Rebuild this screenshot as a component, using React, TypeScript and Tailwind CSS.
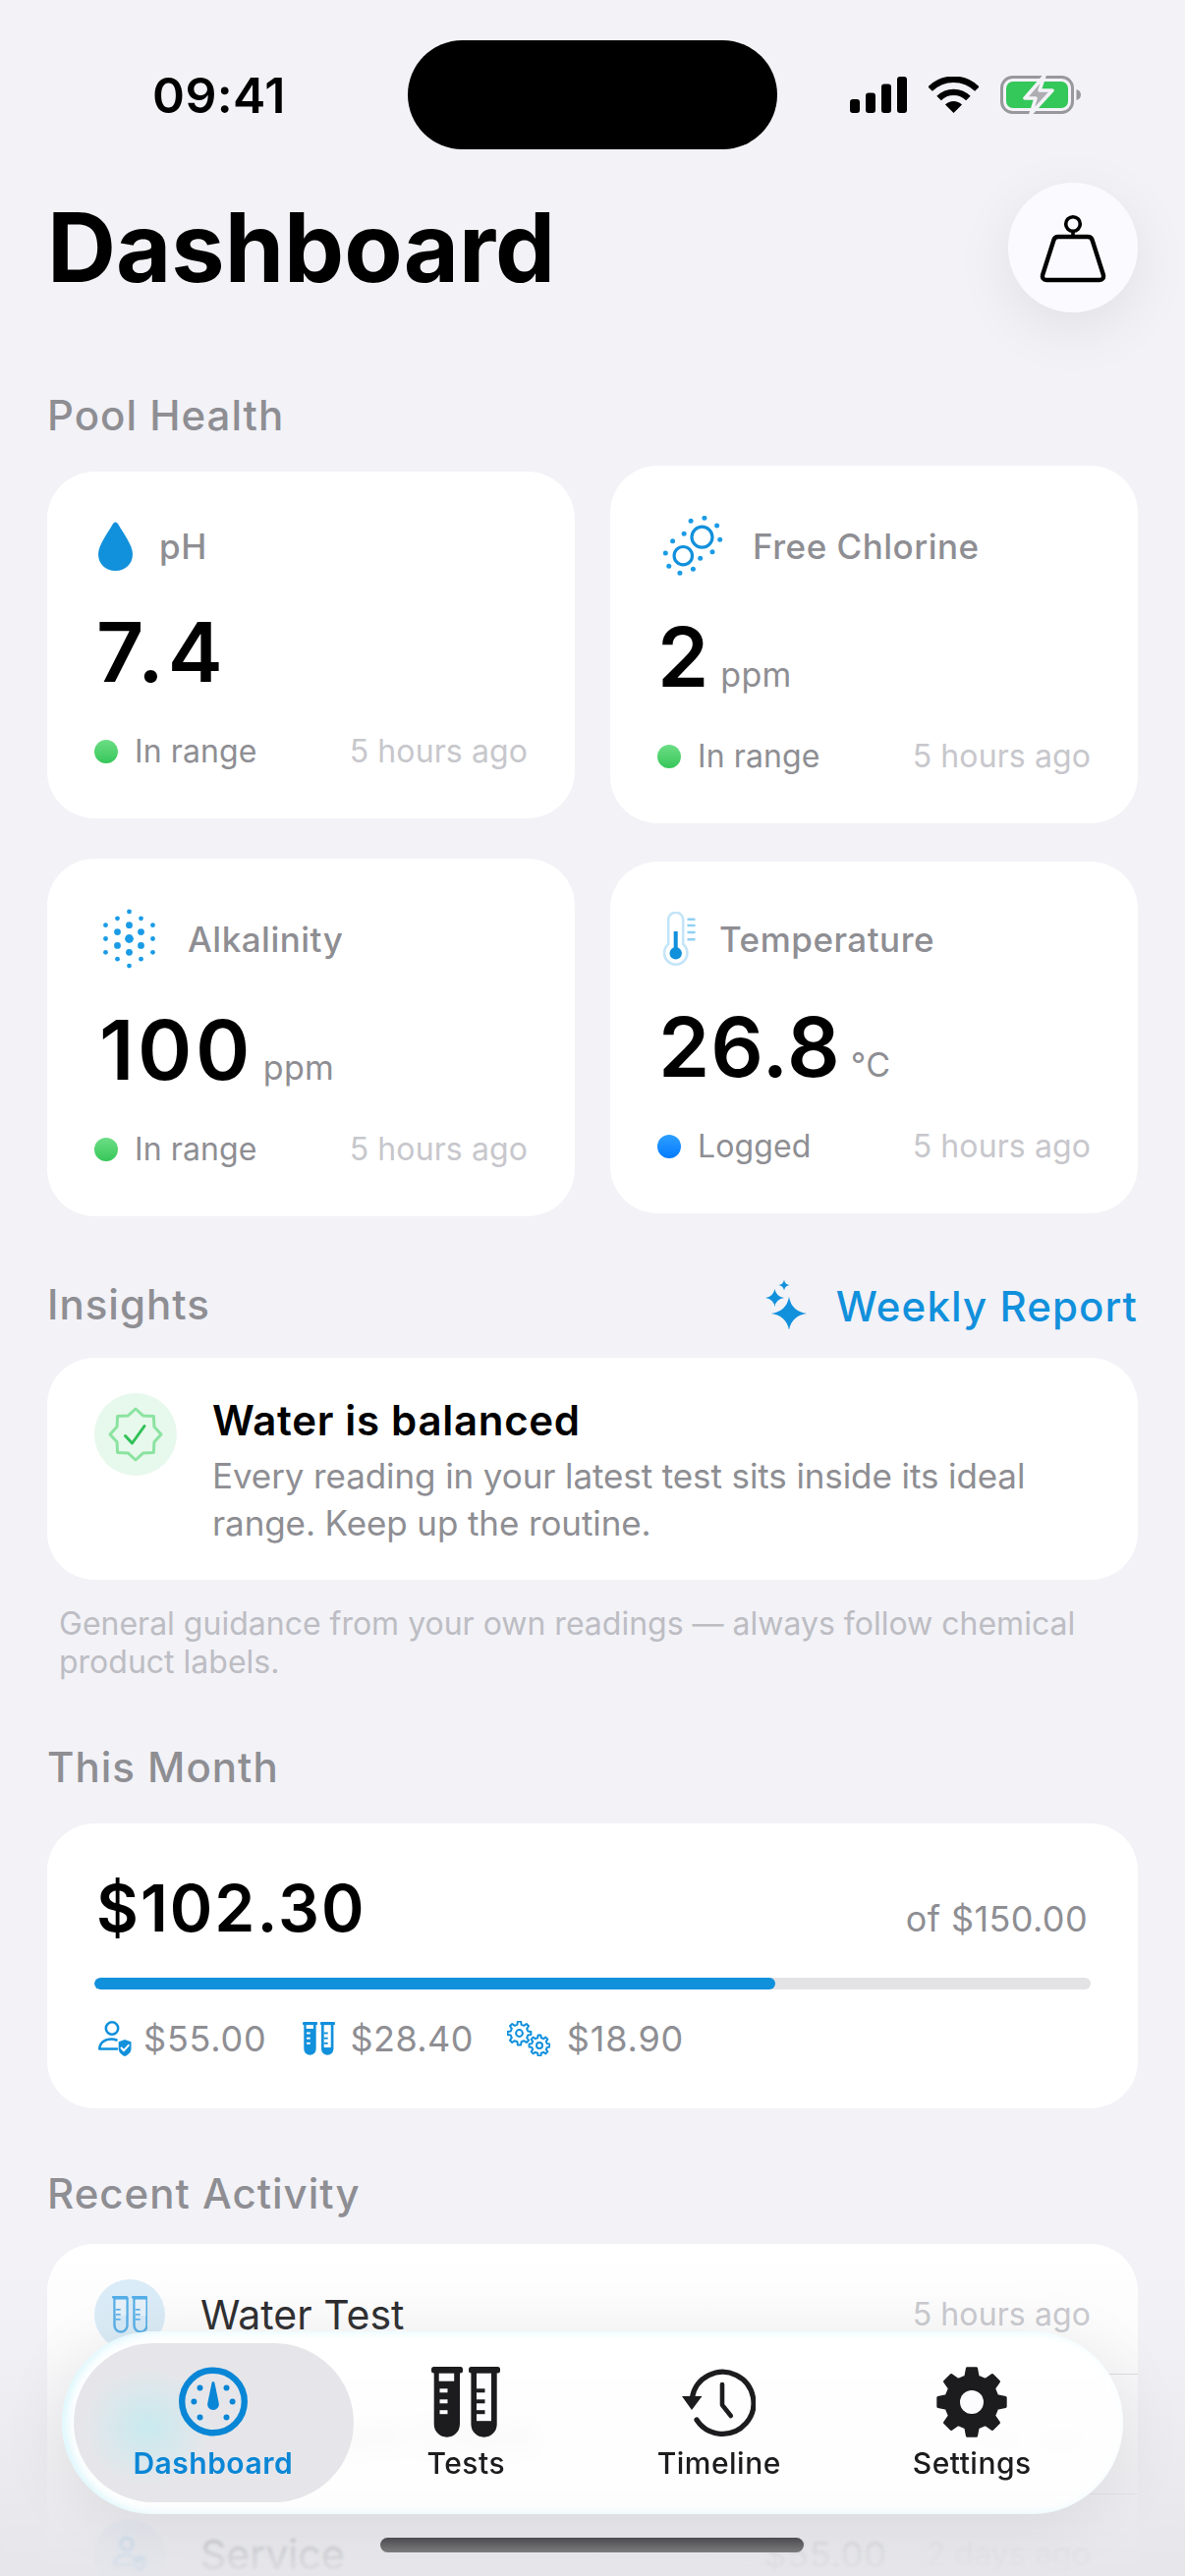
import React from "react";

const BLUE = "#1190dc";

function gearPath(c: number, teeth: number, R: number, r: number, hole: number) {
  const pts: string[] = [];
  const pitch = (Math.PI * 2) / teeth;
  for (let i = 0; i < teeth; i++) {
    const a = -Math.PI / 2 + i * pitch;
    const o = pitch * 0.17;
    const q = pitch * 0.3;
    const list: [number, number][] = [[a - q, r], [a - o, R], [a + o, R], [a + q, r]];
    list.forEach(([t, m]) => pts.push(`${(c + m * Math.cos(t)).toFixed(2)} ${(c + m * Math.sin(t)).toFixed(2)}`));
  }
  let d = "M" + pts.join("L") + "Z";
  if (hole > 0) d += `M${c - hole} ${c}a${hole} ${hole} 0 1 0 ${hole * 2} 0a${hole} ${hole} 0 1 0 ${-hole * 2} 0Z`;
  return d;
}

function starPoints(c: number, R: number, r: number, n: number) {
  const pts: string[] = [];
  for (let i = 0; i < n * 2; i++) {
    const a = -Math.PI / 2 + (i * Math.PI) / n;
    const m = i % 2 === 0 ? R : r;
    pts.push(`${(c + m * Math.cos(a)).toFixed(2)},${(c + m * Math.sin(a)).toFixed(2)}`);
  }
  return pts.join(" ");
}

function Drop() {
  return (
    <svg width="35" height="50" viewBox="0 0 35 50" className="ml-[4px]">
      <path d="M17.5 0.5C19 0.5 20 2 21 3.8C25 11 35 24 35 33C35 43 27.5 50 17.5 50C7.5 50 0 43 0 33C0 24 10 11 14 3.8C15 2 16 0.5 17.5 0.5Z" fill={BLUE} />
    </svg>
  );
}

function Chlorine() {
  const dots = [[297,202],[330,225],[338,268],[318,305],[286,325],[243,250],[261,211],[213,272],[194,309],[203,349],[232,370],[267,358]];
  return (
    <svg width="61" height="61" viewBox="0 0 61 61" className="ml-[6px]">
      <circle cx="39.5" cy="21.7" r="10.5" fill="none" stroke={BLUE} strokeWidth="3.2" />
      <circle cx="20.3" cy="40.7" r="9.2" fill="none" stroke={BLUE} strokeWidth="3.2" />
      {dots.map(([x, y], i) => (
        <circle key={i} cx={(x - 188) / 2.6} cy={(y - 195) / 3} r="2.5" fill="#1a9be6" />
      ))}
    </svg>
  );
}

function Alkalinity() {
  const dots: [number, number, number][] = [
    [0,-27.6,2.4],[0,-13.8,3.4],[0,0,4.4],[0,13.8,3.4],[0,27.6,2.4],
    [-12,-20.7,2.4],[-12,-6.9,3.4],[-12,6.9,3.4],[-12,20.7,2.4],
    [12,-20.7,2.4],[12,-6.9,3.4],[12,6.9,3.4],[12,20.7,2.4],
    [-24,-13.8,2.4],[-24,0,2.4],[-24,13.8,2.4],
    [24,-13.8,2.4],[24,0,2.4],[24,13.8,2.4],
  ];
  return (
    <svg width="53" height="61" viewBox="0 0 53 61" className="ml-[9px]">
      {dots.map(([x, y, r], i) => (
        <circle key={i} cx={26.5 + x} cy={30.5 + y} r={r} fill="#1a9be6" />
      ))}
    </svg>
  );
}

function Thermo() {
  return (
    <svg width="33" height="55" viewBox="0 0 33 55" className="ml-[6px]">
      <path d="M5.2 33V8.2a7.5 7.5 0 0 1 15 0V33a11.7 11.7 0 1 1-15 0Z" fill="#fff" stroke="#c4e5f8" strokeWidth="2.6" />
      <rect x="10.7" y="20" width="4" height="22" fill={BLUE} />
      <circle cx="12.7" cy="42.3" r="6.2" fill={BLUE} />
      {[7.7, 14, 21, 28.3].map((y) => (
        <rect key={y} x="24.5" y={y - 1.3} width="8" height="2.6" rx="0.6" fill="#8fd0f2" />
      ))}
    </svg>
  );
}

function star(cx: number, cy: number, w: number, h: number) {
  const k = 0.14;
  return `M${cx} ${cy - h}Q${cx + w * k} ${cy - h * k} ${cx + w} ${cy}Q${cx + w * k} ${cy + h * k} ${cx} ${cy + h}Q${cx - w * k} ${cy + h * k} ${cx - w} ${cy}Q${cx - w * k} ${cy - h * k} ${cx} ${cy - h}Z`;
}

function Sparkles() {
  return (
    <svg width="42" height="50" viewBox="0 0 42 50">
      <path d={star(24, 34, 18, 17)} fill={BLUE} />
      <path d={star(9.5, 18, 9.5, 9)} fill={BLUE} />
      <path d={star(19, 5, 5.5, 5.5)} fill={BLUE} />
    </svg>
  );
}

function Tubes({ size, color, hole }: { size: number; color: string; hole: string }) {
  return (
    <svg width={size} height={size * (72 / 70)} viewBox="0 0 70 72">
      <rect x="0" y="0" width="32" height="6.5" rx="2.5" fill={color} />
      <rect x="38" y="0" width="32" height="6.5" rx="2.5" fill={color} />
      <path d="M2.7 5H29V58.5a13.15 13.15 0 0 1-26.3 0Z" fill={color} />
      <path d="M40.4 5H66.7V58.5a13.15 13.15 0 0 1-26.3 0Z" fill={color} />
      <rect x="7.7" y="6.7" width="15.5" height="8" fill={hole} />
      <rect x="8.5" y="22.3" width="8" height="4" fill={hole} />
      <rect x="8.5" y="33.3" width="8" height="4" fill={hole} />
      <rect x="8.5" y="44.2" width="8" height="4" fill={hole} />
      <rect x="46" y="6.7" width="15" height="48.5" fill={hole} />
      <rect x="46" y="22.3" width="8.5" height="4" fill={color} />
      <rect x="46" y="33.3" width="8.5" height="4" fill={color} />
      <rect x="46" y="44.2" width="8.5" height="4" fill={color} />
    </svg>
  );
}

function TubesOutline() {
  return (
    <svg width="36" height="38" viewBox="0 0 36 38">
      {[0, 20].map((x) => (
        <g key={x}>
          <path d={`M${x + 2.5} 2.5V30a6.5 6.5 0 0 0 13 0V2.5Z`} fill="#d4eaf9" stroke="#48a9e6" strokeWidth="2.4" />
          <path d={`M${x + 3.7} 3.7H${x + 14.3}V20H${x + 3.7}Z`} fill="#e6f2fb" />
          <rect x={x} y="0" width="16" height="2.6" rx="1" fill="#48a9e6" />
          <rect x={x + 3.7} y="13" width="5" height="1.6" fill="#48a9e6" />
          <rect x={x + 3.7} y="18" width="5" height="1.6" fill="#48a9e6" />
          <rect x={x + 3.7} y="23" width="5" height="1.6" fill="#48a9e6" />
        </g>
      ))}
    </svg>
  );
}

function PersonShield({ color = BLUE, opacity = 1 }: { color?: string; opacity?: number }) {
  return (
    <svg width="34" height="36" viewBox="0 0 34 36" style={{ opacity }}>
      <circle cx="14" cy="7.5" r="6.2" fill="none" stroke={color} strokeWidth="2.6" />
      <path d="M1.3 28.5C1.5 22 7 18.5 13.5 18.5C15.5 18.5 17 18.8 18.5 19.5M1.3 28.5H19" fill="none" stroke={color} strokeWidth="2.6" strokeLinecap="round" />
      <path d="M27 19L33.5 21.3V28C33.5 32 30.5 34.5 27 36C23.5 34.5 20.7 32 20.7 28V21.3Z" fill={color} />
      <path d="M23.5 27.5L26 30.2L30.8 24.8" fill="none" stroke="#fff" strokeWidth="2" strokeLinecap="round" strokeLinejoin="round" />
    </svg>
  );
}

function GearsSmall() {
  return (
    <svg width="44" height="36" viewBox="0 0 44 36">
      <g transform="translate(0 0)">
        <path d={gearPath(12.5, 8, 12, 9, 0)} fill="none" stroke={BLUE} strokeWidth="2" strokeLinejoin="round" />
        <circle cx="12.5" cy="12.5" r="3.4" fill="none" stroke={BLUE} strokeWidth="2" />
      </g>
      <g transform="translate(22 14)">
        <path d={gearPath(11, 8, 10.5, 8, 0)} fill="none" stroke={BLUE} strokeWidth="2" strokeLinejoin="round" />
        <circle cx="11" cy="11" r="3" fill="none" stroke={BLUE} strokeWidth="2" />
      </g>
    </svg>
  );
}

function Weight() {
  return (
    <svg width="72" height="76" viewBox="0 0 72 76" fill="none">
      <circle cx="36" cy="14" r="7.3" stroke="#000" strokeWidth="3.6" />
      <path d="M36 21V27" stroke="#000" strokeWidth="3.6" />
      <path d="M21 27H51C53.5 27 55.3 28.5 55.8 31L66.8 65.5C67.7 69 66 71 63 71H9C6 71 4.3 69 5.2 65.5L16.2 31C16.7 28.5 18.5 27 21 27Z" stroke="#000" strokeWidth="4.4" strokeLinejoin="round" />
    </svg>
  );
}

function Cellular() {
  return (
    <svg width="58" height="37" viewBox="0 0 58 37">
      <rect x="0" y="23" width="10" height="14" rx="3" />
      <rect x="16" y="16.5" width="10" height="20.5" rx="3" />
      <rect x="32" y="7.5" width="10" height="29.5" rx="3" />
      <rect x="48" y="0" width="10" height="37" rx="3" />
    </svg>
  );
}

function Wifi() {
  return (
    <svg width="51" height="37" viewBox="0 0 51 37" fill="none">
      <path d="M1.6 12.6A33.8 33.8 0 0 1 49.4 12.6" stroke="#000" strokeWidth="6.4" />
      <path d="M10.6 22.1A21 21 0 0 1 40.4 22.1" stroke="#000" strokeWidth="6.4" />
      <path d="M25.5 37L17 28.5A12 12 0 0 1 34 28.5Z" fill="#000" />
    </svg>
  );
}

function Battery() {
  return (
    <svg width="83" height="41" viewBox="0 0 83 41">
      <rect x="1.5" y="2.5" width="72" height="36" rx="11" fill="none" stroke="#98989d" strokeWidth="3" />
      <rect x="6" y="7" width="63" height="27" rx="7" fill="#34c759" />
      <path d="M77.5 15C80 15.5 82 17.5 82 20.5C82 23.5 80 25.5 77.5 26Z" fill="#98989d" />
      <path d="M45 1L25 24H36L31 40L53 16H40Z" fill="#aeaeb2" stroke="#f2f2f7" strokeWidth="3.6" strokeLinejoin="round" />
    </svg>
  );
}

function BalancedBadge() {
  return (
    <div className="w-[84px] h-[84px] rounded-full bg-[#e7f8ec] flex items-center justify-center shrink-0">
      <svg width="56" height="56" viewBox="0 0 56 56" fill="none">
        <polygon points={starPoints(28, 26, 20.5, 8)} stroke="#8be3a0" strokeWidth="3" strokeLinejoin="round" />
        <path d="M17.5 29.5L24.5 37L37 19.5" stroke="#2fc157" strokeWidth="3" strokeLinecap="round" strokeLinejoin="round" />
      </svg>
    </div>
  );
}

function Gauge() {
  const dots = [[-13.5,-14],[13.5,-14],[-19.6,0],[19.6,0],[-13.5,16],[13.5,16]];
  return (
    <svg width="70" height="72" viewBox="0 0 70 72">
      <circle cx="35" cy="35.5" r="31.8" fill="none" stroke="#0a86d6" strokeWidth="6.4" />
      {dots.map(([x, y], i) => (
        <circle key={i} cx={35 + x} cy={35.5 + y} r="3" fill="#0a86d6" />
      ))}
      <path d="M35 15C36 15 36.5 16 36.8 18L40.8 37.5C41.2 41 38.5 44 35 44C31.5 44 28.8 41 29.2 37.5L33.2 18C33.5 16 34 15 35 15Z" fill="#0a86d6" />
    </svg>
  );
}

function History() {
  return (
    <svg width="75" height="72" viewBox="0 0 75 72" fill="none">
      <path d="M10.5 31A31.5 31.5 0 1 1 15 54" stroke="#1c1c1e" strokeWidth="5.2" strokeLinecap="round" />
      <path d="M41 18V38.8L49.8 50" stroke="#1c1c1e" strokeWidth="4.6" strokeLinecap="round" strokeLinejoin="round" />
      <path d="M0 30H20.5L10 44Z" fill="#1c1c1e" />
    </svg>
  );
}

function Gear() {
  return (
    <svg width="72" height="72" viewBox="0 0 72 72">
      <path d={gearPath(36, 8, 34.5, 26.5, 12)} fill="#1c1c1e" fillRule="evenodd" stroke="#1c1c1e" strokeWidth="3" strokeLinejoin="round" />
      <circle cx="36" cy="36" r="12" fill="#fcfcfe" />
    </svg>
  );
}

function Metric({ icon, h, gap, title, value, unit, dot, status, pad = "pl-0", track = "tracking-[2px]" }: {
  icon: React.ReactNode; h: string; gap: string; title: string; value: string; unit?: string; dot: string; status: string; pad?: string; track?: string;
}) {
  return (
    <div className="bg-white rounded-[48px] px-[48px] pt-[51px] pb-[48px]">
      <div className={`flex items-center ${h}`}>
        {icon}
        <span className={`${gap} text-[35px] leading-[40px] font-medium text-[#8e8e93] tracking-[0.5px]`}>{title}</span>
      </div>
      <div className={`mt-[33px] mb-[31px] h-[100px] flex items-baseline ${pad}`}>
        <span className={`text-[84px] leading-[100px] font-semibold text-black ${track}`}>{value}</span>
        {unit && <span className="ml-[10px] text-[34px] leading-[40px] text-[#8e8e93] tracking-[0.3px]">{unit}</span>}
      </div>
      <div className="flex items-center justify-between h-[40px]">
        <div className="flex items-center gap-[17px]">
          <span className={`w-[24px] h-[24px] rounded-full ${dot}`} />
          <span className="text-[32px] leading-[40px] text-[#8e8e93] tracking-[0.1px]">{status}</span>
        </div>
        <span className="text-[32px] leading-[40px] text-[#c7c7cc] tracking-[0.1px]">5 hours ago</span>
      </div>
    </div>
  );
}

function Row({ icon, title, amount, time, last }: { icon: React.ReactNode; title: string; amount?: string; time: string; last?: boolean }) {
  return (
    <div className="flex items-center h-[122px] pl-[48px]">
      <div className="w-[72px] h-[72px] rounded-full flex items-center justify-center shrink-0 bg-[#d9ecf8]">{icon}</div>
      <div className={`ml-[36px] flex-1 h-full flex items-center pr-[48px] ${last ? "" : "border-b border-[#d9d9dd]"}`}>
        <span className="text-[41px] leading-[52px] text-[#1c1c1e] flex-1">{title}</span>
        {amount && <span className="text-[36px] leading-[48px] text-[#8e8e93] mr-[40px] tracking-[0.8px]">{amount}</span>}
        <span className="text-[32px] leading-[40px] text-[#c7c7cc] tracking-[0.1px]">{time}</span>
      </div>
    </div>
  );
}

function Tab({ icon, label, active }: { icon: React.ReactNode; label: string; active?: boolean }) {
  return (
    <div className="flex-1 flex flex-col items-center relative">
      <div className="h-[72px] flex items-center justify-center">{icon}</div>
      <span className={`mt-[8px] text-[30px] leading-[36px] tracking-[0.5px] ${active ? "font-semibold text-[#0a86d6]" : "font-medium text-[#1c1c1e]"}`}>{label}</span>
    </div>
  );
}

function SectionTitle({ children }: { children: React.ReactNode }) {
  return <h2 className="text-[42px] leading-[50px] font-medium text-[#8e8e93] tracking-[1px]">{children}</h2>;
}

export default function App() {
  return (
    <div className="relative w-[1206px] h-[2622px] overflow-hidden bg-[#f2f2f7] [font-family:Inter,sans-serif]">
      <div className="pt-[41px] grid grid-cols-[415px_376px_1fr] items-center">
        <span className="pl-[155px] text-[50px] leading-[60px] font-semibold text-black tracking-[0.4px]">09:41</span>
        <div className="h-[111px] rounded-full bg-black" />
        <div className="pl-[74px] flex items-center">
          <Cellular />
          <span className="ml-[22px]"><Wifi /></span>
          <span className="ml-[22px]"><Battery /></span>
        </div>
      </div>

      <div className="px-[48px]">
        <div className="mt-[34px] h-[132px] flex items-center justify-between">
          <h1 className="text-[97px] leading-[120px] font-bold text-black">Dashboard</h1>
          <div className="w-[132px] h-[132px] rounded-full bg-[#fbfbff] flex items-center justify-center shadow-[0_16px_60px_rgba(0,0,0,0.08)]">
            <Weight />
          </div>
        </div>

        <div className="mt-[80px]"><SectionTitle>Pool Health</SectionTitle></div>

        <div className="mt-[26px] grid grid-cols-2 gap-[36px] items-center">
          <Metric icon={<Drop />} h="h-[50px]" gap="ml-[27px]" title="pH" value="7.4" pad="pl-[2px]" track="tracking-[4px]" dot="bg-gradient-to-b from-[#6bdd85] to-[#34c759]" status="In range" />
          <Metric icon={<Chlorine />} h="h-[61px]" gap="ml-[30px]" title="Free Chlorine" value="2" unit="ppm" dot="bg-gradient-to-b from-[#6bdd85] to-[#34c759]" status="In range" />
          <Metric icon={<Alkalinity />} h="h-[61px]" gap="ml-[33px]" title="Alkalinity" value="100" unit="ppm" pad="pl-[5px]" track="tracking-[3.5px]" dot="bg-gradient-to-b from-[#6bdd85] to-[#34c759]" status="In range" />
          <Metric icon={<Thermo />} h="h-[55px]" gap="ml-[24px]" title="Temperature" value="26.8" unit="°C" pad="pl-[1px]" track="tracking-[1px]" dot="bg-gradient-to-b from-[#2d9fff] to-[#007aff]" status="Logged" />
        </div>

        <div className="mt-[65px] flex items-start justify-between h-[50px]">
          <SectionTitle>Insights</SectionTitle>
          <div className="flex items-center h-[50px]">
            <Sparkles />
            <span className="ml-[30px] mt-[3px] text-[42px] leading-[50px] font-medium text-[#1190dc] tracking-[1.1px]">Weekly Report</span>
          </div>
        </div>

        <div className="mt-[29px] bg-white rounded-[48px] pl-[48px] pr-[48px] pt-[36px] pb-[34px] flex items-start gap-[36px]">
          <BalancedBadge />
          <div className="mt-[3px]">
            <div className="text-[42px] leading-[50px] font-semibold text-black tracking-[0.7px]">Water is balanced</div>
            <p className="mt-[7px] text-[35px] leading-[48px] text-[#8e8e93] tracking-[-0.1px]">Every reading in your latest test sits inside its ideal range. Keep up the routine.</p>
          </div>
        </div>

        <p className="mt-[25px] ml-[12px] mr-[40px] text-[32px] leading-[39px] text-[#bdbdc3]">General guidance from your own readings — always follow chemical product labels.</p>

        <div className="mt-[63px]"><SectionTitle>This Month</SectionTitle></div>

        <div className="mt-[32px] bg-white rounded-[48px] px-[48px] pt-[46px] pb-[53px]">
          <div className="flex items-baseline justify-between pl-[2px]">
            <span className="text-[66px] leading-[80px] font-semibold text-black tracking-[2px]">$102.30</span>
            <span className="text-[36px] leading-[40px] text-[#8e8e93] mr-[3px] tracking-[0.4px]">of $150.00</span>
          </div>
          <div className="mt-[31px] h-[12px] rounded-full bg-[#e3e3e5] overflow-hidden">
            <div className="h-full rounded-full bg-[#1190dc]" style={{ width: "68.3%" }} />
          </div>
          <div className="mt-[32px] flex items-center h-[36px] pl-[4px]">
            <PersonShield />
            <span className="ml-[12px] text-[36px] leading-[36px] text-[#8e8e93] tracking-[0.8px]">$55.00</span>
            <span className="ml-[36px]"><Tubes size={33} color={BLUE} hole="#fff" /></span>
            <span className="ml-[16px] text-[36px] leading-[36px] text-[#8e8e93] tracking-[0.4px]">$28.40</span>
            <span className="ml-[34px]"><GearsSmall /></span>
            <span className="ml-[17px] text-[36px] leading-[36px] text-[#8e8e93] tracking-[0.8px]">$18.90</span>
          </div>
        </div>

        <div className="mt-[62px]"><SectionTitle>Recent Activity</SectionTitle></div>

        <div className="mt-[26px] bg-white rounded-[48px] pt-[11px]">
          <Row icon={<TubesOutline />} title="Water Test" time="5 hours ago" />
          <Row icon={<GearsSmall />} title="Equipment Check" time="1 day ago" />
          <Row icon={<PersonShield />} title="Service" amount="$55.00" time="2 days ago" last />
        </div>
      </div>

      <div className="absolute inset-x-0 bottom-0 h-[339px] pointer-events-none bg-[linear-gradient(to_bottom,rgba(229,229,234,0)_0%,rgba(229,229,234,0.12)_26%,rgba(229,229,234,0.5)_58%,rgba(229,229,234,0.86)_88%,rgba(229,229,234,0.97)_100%)]" />
      <div className="absolute inset-x-0 bottom-0 h-[70px] pointer-events-none backdrop-blur-[1.5px]" />

      <div className="absolute left-[63px] top-[2373px] w-[1080px] h-[186px] rounded-full bg-white/90 backdrop-blur-[10px] shadow-[0_10px_70px_rgba(0,0,0,0.08),inset_5px_0_8px_rgba(190,240,250,0.55)]">
        <div className="absolute left-[12px] top-[12px] w-[285px] h-[162px] rounded-full bg-[#e6e6ea]">
          <div className="absolute left-[10px] top-[25px] w-[130px] h-[120px] rounded-full bg-[radial-gradient(closest-side,rgba(190,235,240,0.75),rgba(190,235,240,0))]" />
        </div>
        <div className="relative flex pt-[36px] px-[25px]">
          <Tab icon={<Gauge />} label="Dashboard" active />
          <Tab icon={<Tubes size={70} color="#1c1c1e" hole="#fcfcfe" />} label="Tests" />
          <Tab icon={<History />} label="Timeline" />
          <Tab icon={<Gear />} label="Settings" />
        </div>
      </div>

      <div className="absolute left-[387px] top-[2583px] w-[431px] h-[15px] rounded-full bg-gradient-to-b from-[#4c4c4e] to-[#7c7c7e]" />
    </div>
  );
}
